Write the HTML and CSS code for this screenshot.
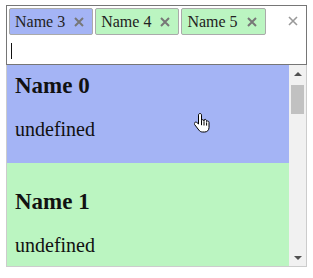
FILE: index.html
```html
<!DOCTYPE html>
<html lang="en">

<head>
    <meta charset="UTF-8">
    <title>Multi select</title>
    <link rel="stylesheet" href="styles.css">
</head>

<body>
    <div class="select">
        <!-- selected values -->
        <div class="control">
            <div class="values">
                <span class="tag tag-blue">Name 3 <svg class="x" viewBox="0 0 10 10"><path d="M1 1L9 9M9 1L1 9" /></svg></span>
                <span class="tag tag-green">Name 4 <svg class="x" viewBox="0 0 10 10"><path d="M1 1L9 9M9 1L1 9" /></svg></span>
                <span class="tag tag-green">Name 5 <svg class="x" viewBox="0 0 10 10"><path d="M1 1L9 9M9 1L1 9" /></svg></span>
                <div class="input-row"><span class="caret"></span></div>
            </div>
            <div class="clear"><svg class="x" viewBox="0 0 10 10"><path d="M1 1L9 9M9 1L1 9" /></svg></div>
        </div>

        <!-- dropdown -->
        <div class="menu">
            <div id="options" class="options">
                <div class="option opt-blue">
                    <h2 class="option-title">Name 0</h2>
                    <p class="option-desc">undefined</p>
                </div>
                <div class="option opt-green">
                    <h2 class="option-title">Name 1</h2>
                    <p class="option-desc">undefined</p>
                </div>
            </div>
            <div class="scrollbar">
                <div class="sb-btn"><span class="arrow-up"></span></div>
                <div class="sb-track"><div class="sb-thumb"></div></div>
                <div class="sb-btn"><span class="arrow-down"></span></div>
            </div>

            <!-- mouse pointer -->
            <svg class="pointer" viewBox="0 0 16 22">
                <path d="M6 1.5c-1 0-1.5.7-1.5 1.6V12L3 10.6c-.8-.7-2-.6-2.5.2-.4.6-.2 1.4.3 2l4 5.2c1 1.3 2 2 3.8 2h2c2.6 0 4.4-1.8 4.4-4.5v-5c0-.9-.6-1.5-1.4-1.5-.5 0-.9.2-1.1.5v-.6c0-.9-.6-1.5-1.4-1.5-.5 0-.9.2-1.1.6V9.2c0-.9-.6-1.5-1.4-1.5-.5 0-.9.2-1.1.5V3.1c0-.9-.5-1.6-1.5-1.6z" />
                <path class="pointer-line" d="M10 9.5v4M12.6 10.4v3.2M7.5 8.2v5" />
            </svg>
        </div>
    </div>

    <script src="script.js"></script>
</body>

</html>
```

FILE: styles.css
```css
/* base */
body {
    margin: 0;
    padding: 5px 6px;
    font-family: "Liberation Serif", "Times New Roman", serif;
    background-color: #ffffff;
    color: #111111;
}

.select {
    width: 301px;
    position: relative;
}

/* control with tags */
.control {
    display: flex;
    border: 1px solid #767676;
    background-color: #ffffff;
}

.values {
    flex: 1;
    display: flex;
    flex-wrap: wrap;
    gap: 2px;
    padding: 2px 0 0 2px;
}

.tag {
    display: flex;
    align-items: center;
    gap: 9px;
    height: 25px;
    padding: 0 8px 0 5px;
    border: 1px solid #aaaaaa;
    border-radius: 2px;
    font-size: 16px;
    color: #222222;
}

.tag-blue {
    background-color: #a4b4f5;
}

.tag-green {
    background-color: #bbf5c1;
}

.x {
    width: 10px;
    height: 10px;
    stroke: #777777;
    stroke-width: 2;
    fill: none;
}

.input-row {
    width: 100%;
    height: 27px;
    display: flex;
    align-items: center;
    padding-left: 2px;
}

.caret {
    width: 1px;
    height: 16px;
    background-color: #111111;
}

.clear {
    width: 24px;
    margin-right: 1px;
    height: 29px;
    display: flex;
    align-items: center;
    justify-content: center;
}

.clear .x {
    stroke: #999999;
    stroke-width: 1.6;
}

/* dropdown */
.menu {
    display: flex;
    height: 201px;
    border: 1px solid #cccccc;
    border-top: none;
    position: relative;
}

.options {
    flex: 1;
    overflow: hidden;
}

.option {
    padding: 9px 8px 23px;
}

.opt-blue {
    background-color: #a4b4f5;
}

.opt-green {
    background-color: #bbf5c1;
}

.option-title {
    margin: 17px 0 19px;
    font-size: 23px;
    line-height: 26px;
    font-weight: bold;
}

.option-desc {
    margin: 0;
    font-size: 20px;
    line-height: 22px;
}

/* scrollbar */
.scrollbar {
    width: 17px;
    display: flex;
    flex-direction: column;
    background-color: #f1f1f1;
}

.sb-btn {
    height: 17px;
    display: flex;
    align-items: center;
    justify-content: center;
}

.sb-track {
    flex: 1;
    padding-top: 3px;
}

.sb-thumb {
    height: 29px;
    margin: 0 2px;
    background-color: #c1c1c1;
}

.arrow-up,
.arrow-down {
    width: 0;
    height: 0;
    border-left: 4px solid transparent;
    border-right: 4px solid transparent;
}

.arrow-up {
    border-bottom: 4px solid #505050;
}

.arrow-down {
    border-top: 4px solid #505050;
}

.pointer {
    position: absolute;
    left: 187px;
    top: 47px;
    width: 16px;
    height: 22px;
    fill: #ffffff;
    stroke: #000000;
    stroke-width: 1;
}

.pointer-line {
    fill: none;
}
```

FILE: script.js
```js
// list is shown slightly scrolled
document.getElementById('options').scrollTop = 18;
```
